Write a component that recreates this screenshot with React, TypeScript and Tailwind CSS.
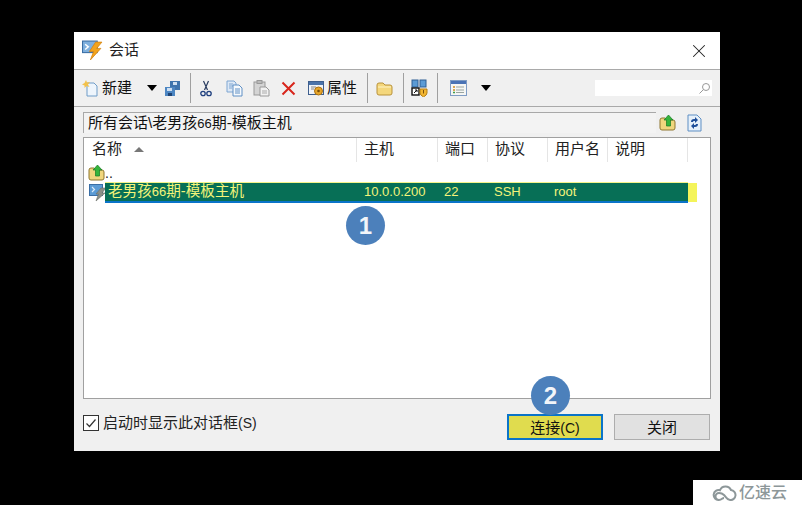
import { X } from 'lucide-react';

const cjk = "font-['Liberation_Sans','Noto_Sans_CJK_SC',sans-serif]";

function Caret() {
  return <div className="w-0 h-0 border-x-[5px] border-x-transparent border-t-[6px] border-t-black" />;
}

function Sep({ className }: { className: string }) {
  return <div className={`w-px h-[30px] bg-[#a0a0a0] ${className}`} />;
}

function SessionIcon({ size = 21 }: { size?: number }) {
  return (
    <svg width={size} height={size} viewBox="0 0 20 20">
      <rect x="0.5" y="1" width="14" height="11" fill="#7fb0de" stroke="#3a6ea5" />
      <path d="M3 4l3 2.5L3 9" stroke="#fff" strokeWidth="1.4" fill="none" />
      <path d="M13 2h6l-5 6h4L8 19l3-8H7z" fill="#f2a31c" stroke="#d0800f" strokeWidth="0.7" />
    </svg>
  );
}

function NewIcon() {
  return (
    <svg width="17" height="17" viewBox="0 0 17 17">
      <path d="M5 3h7l3 3v10H5z" fill="#eef5fc" stroke="#6f9cc8" />
      <path d="M4 0l1 2.5L8 2 6 4.500 7.500 7 4.500 6 2.500 8 2.500 5.500 0 4.500 2.500 3z" fill="#f3c14a" />
    </svg>
  );
}

function SaveIcon() {
  return (
    <svg width="17" height="17" viewBox="0 0 17 17">
      <path d="M6 1h10v9h-5v-3H6z" fill="#3f74ad" />
      <rect x="9" y="2" width="4" height="3" fill="#cfe0f2" />
      <rect x="1" y="7" width="10" height="9" fill="#4d86c2" />
      <rect x="3" y="8" width="5" height="3" fill="#cfe0f2" />
      <rect x="4" y="13" width="4" height="3" fill="#1f4474" />
    </svg>
  );
}

function ScissorsIcon() {
  return (
    <svg width="12" height="17" viewBox="0 0 12 17">
      <path d="M3.500 1l4 9M8.500 1l-4 9" stroke="#2a3c60" strokeWidth="1.200" fill="none" />
      <circle cx="3" cy="13.500" r="2.200" fill="none" stroke="#20407f" strokeWidth="1.300" />
      <circle cx="9" cy="13.500" r="2.200" fill="none" stroke="#20407f" strokeWidth="1.300" />
    </svg>
  );
}

function CopyIcon() {
  return (
    <svg width="17" height="17" viewBox="0 0 17 17">
      <path d="M1 1h7l2 2v9H1z" fill="#dce8f6" stroke="#7ea6d2" />
      <path d="M3 4h4M3 6h4M3 8h3" stroke="#7ea6d2" />
      <path d="M7 5h6l3 3v8H7z" fill="#f5f9fd" stroke="#5f8fc4" />
      <path d="M9 9h5M9 11h5M9 13h5" stroke="#5f8fc4" />
    </svg>
  );
}

function PasteIcon() {
  return (
    <svg width="17" height="17" viewBox="0 0 17 17">
      <rect x="1" y="2" width="11" height="13" fill="#d4d4d4" stroke="#999" />
      <rect x="4" y="0.500" width="5" height="3" fill="#bbb" stroke="#999" />
      <path d="M7 7h6l3 3v6H7z" fill="#f2f2f2" stroke="#999" />
      <path d="M9 11h5M9 13h5" stroke="#aaa" />
    </svg>
  );
}

function DeleteIcon() {
  return (
    <svg width="15" height="15" viewBox="0 0 15 15">
      <path d="M1.500 1.500l12 12M13.500 1.500l-12 12" stroke="#d8261c" strokeWidth="2" />
    </svg>
  );
}

function PropsIcon() {
  return (
    <svg width="17" height="17" viewBox="0 0 17 17">
      <rect x="0.500" y="1.500" width="15" height="13" fill="#f0f3f8" stroke="#3e5f8e" />
      <rect x="1" y="2" width="14" height="3" fill="#4a73aa" />
      <path d="M3 7h5M3 9h3" stroke="#888" />
      <circle cx="10.500" cy="11" r="4" fill="#e7a62a" stroke="#a86f10" />
      <circle cx="10.500" cy="11" r="1.300" fill="#7a4e08" />
    </svg>
  );
}

function FolderIcon() {
  return (
    <svg width="17" height="17" viewBox="0 0 17 17">
      <path d="M1 5q0-2 2-2h4l2 2h5q2 0 2 2v6q0 2-2 2H3q-2 0-2-2z" fill="#f4d77c" stroke="#b9923a" />
      <path d="M2 7h13" stroke="#fff3c4" />
    </svg>
  );
}

function ShortcutIcon() {
  return (
    <svg width="17" height="18" viewBox="0 0 17 18">
      <rect x="1" y="1" width="6" height="7" fill="#5b9bd5" stroke="#2f5f94" />
      <rect x="9" y="1" width="6" height="7" fill="#5b9bd5" stroke="#2f5f94" />
      <rect x="1" y="9" width="7" height="7" fill="#fff" stroke="#111" strokeWidth="1.400" />
      <path d="M3 14l3-3M4 11h2v2" stroke="#111" fill="none" />
      <path d="M9 10h7v4q0 2-3.500 4Q9 16 9 14z" fill="#f2b632" stroke="#b67f10" />
      <path d="M12.500 11v3.500" stroke="#7a4e08" />
    </svg>
  );
}

function ListIcon() {
  return (
    <svg width="17" height="16" viewBox="0 0 17 16">
      <rect x="0.500" y="0.500" width="16" height="15" fill="#f5f6f4" stroke="#7f9cc4" />
      <rect x="1" y="1" width="15" height="3" fill="#4a73b5" />
      <path d="M3 7h2M3 10h2" stroke="#d18a1c" strokeWidth="1.500" />
      <path d="M3 12.500h2" stroke="#3f9e4a" strokeWidth="1.500" />
      <path d="M6 7h8M6 10h8M6 12.500h8" stroke="#9aa5a0" />
    </svg>
  );
}

function FolderUpIcon() {
  return (
    <svg width="17" height="17" viewBox="0 0 17 17">
      <path d="M1 6q0-2 2-2h3l2 2h6q2 0 2 2v6q0 2-2 2H3q-2 0-2-2z" fill="#f0d67e" stroke="#8f7730" />
      <path d="M9.500 1l4.500 5h-2.500v6H7.500V6H5z" fill="#35b43c" stroke="#177a22" strokeWidth="0.700" />
    </svg>
  );
}

function RefreshIcon() {
  return (
    <svg width="15" height="18" viewBox="0 0 15 18">
      <path d="M1 1h9l4 4v12H1z" fill="#e6f0fa" stroke="#5f8fc4" />
      <path d="M4 8q0-3 3-3h1V3l3 3-3 3V7H7q-1 0-1 1z" fill="#1d4e9a" />
      <path d="M11 10q0 3-3 3H7v2l-3-3 3-3v2h1q1 0 1-1z" fill="#1d4e9a" />
    </svg>
  );
}

function HostIcon() {
  return (
    <svg width="18" height="18" viewBox="0 0 18 18">
      <rect x="0.500" y="0.500" width="13" height="11" fill="#5b9bd5" stroke="#3a6ea5" />
      <path d="M3 3l2.500 2.500L3 8" stroke="#dcebf8" strokeWidth="1.200" fill="none" />
      <path d="M12 4h5l-4 5h3L7 17l2.500-7H7z" fill="#8b8f88" stroke="#6a6e68" strokeWidth="0.600" />
    </svg>
  );
}

function CloudLogo() {
  return (
    <svg width="27" height="16" viewBox="0 0 27 16">
      <path d="M8 15a5 5 0 1 1 1-9.800A6 6 0 0 1 20 5a5 5 0 1 1-1 10c-3 0-4-3-6-5s-3-2-5-2a3.500 3.500 0 0 0 0 7c3 0 3-2 5-2" fill="none" stroke="#8d9799" strokeWidth="2" />
    </svg>
  );
}

function HeaderCell({ label, className }: { label: string; className: string }) {
  return (
    <div className={`h-[24px] border-r border-[#e5e5e5] text-[15px] leading-[22px] text-[#222] pl-[7px] whitespace-nowrap ${className}`}>
      {label}
    </div>
  );
}

export default function App() {
  return (
    <div className={`relative w-[802px] h-[505px] bg-black overflow-hidden pt-[32px] pl-[74px] ${cjk}`}>
      <div className="w-[646px] h-[419px] bg-[#f0f0f0] flex flex-col">
        <div className="h-[37px] bg-white flex items-center pl-[8px] pr-[10px]">
          <SessionIcon />
          <span className="ml-[6px] text-[15px] text-[#222]">会话</span>
          <X className="ml-auto w-[22px] h-[22px] text-[#222]" strokeWidth={1.100} />
        </div>

        <div className="h-[38px] border-y border-[#a9a9a9] flex items-center pl-[8px]">
          <NewIcon />
          <span className="ml-[3px] w-[30px] text-[15px] text-[#111] whitespace-nowrap">新建</span>
          <div className="ml-[15px]"><Caret /></div>
          <div className="ml-[7px]"><SaveIcon /></div>
          <Sep className="ml-[9px]" />
          <div className="ml-[9px]"><ScissorsIcon /></div>
          <div className="ml-[14px]"><CopyIcon /></div>
          <div className="ml-[10px]"><PasteIcon /></div>
          <div className="ml-[11px]"><DeleteIcon /></div>
          <div className="ml-[12px]"><PropsIcon /></div>
          <span className="ml-[2px] w-[30px] text-[15px] text-[#111] whitespace-nowrap">属性</span>
          <Sep className="ml-[10px]" />
          <div className="ml-[8px]"><FolderIcon /></div>
          <Sep className="ml-[10px]" />
          <div className="ml-[7px]"><ShortcutIcon /></div>
          <Sep className="ml-[9px]" />
          <div className="ml-[12px]"><ListIcon /></div>
          <div className="ml-[14px]"><Caret /></div>
          <div className="ml-[104px] w-[117px] h-[16px] bg-white flex items-center justify-end pr-[1px]">
            <svg width="13" height="13" viewBox="0 0 13 13">
              <circle cx="8" cy="5" r="3.500" fill="none" stroke="#999" />
              <path d="M5.500 7.500L1.500 11.500" stroke="#999" />
            </svg>
          </div>
        </div>

        <div className="mt-[5px] h-[21px] ml-[9px] flex items-center">
          <div className="w-[573px] h-[21px] border-t border-l border-[#a8a8a8] bg-[#f3f3f3] text-[15px] leading-[19px] pl-[4px] text-[#111] whitespace-nowrap">
            所有会话\老男孩<span className="text-[13px]">66</span>期-模板主机
          </div>
          <div className="ml-[3px]"><FolderUpIcon /></div>
          <div className="ml-[11px]"><RefreshIcon /></div>
        </div>

        <div className="mt-[4px] ml-[9px] w-[628px] h-[262px] bg-white border border-[#a0a0a0] flex flex-col text-[#222]">
          <div className="flex">
            <div className="w-[273px] h-[24px] border-r border-[#e5e5e5] flex items-center pl-[8px] pb-[2px]">
              <span className="text-[15px]">名称</span>
              <div className="ml-[12px] w-0 h-0 border-x-[5px] border-x-transparent border-b-[5px] border-b-[#777]" />
            </div>
            <HeaderCell label="主机" className="w-[81px]" />
            <HeaderCell label="端口" className="w-[50px]" />
            <HeaderCell label="协议" className="w-[60px]" />
            <HeaderCell label="用户名" className="w-[60px]" />
            <HeaderCell label="说明" className="w-[80px]" />
          </div>
          <div className="h-[19px] flex items-center pl-[4px] mt-[1px]">
            <FolderUpIcon />
            <span className="text-[14px] leading-none">..</span>
          </div>
          <div className="h-[21px] flex items-center pl-[5px]">
            <HostIcon />
            <div className="ml-[-2px] w-[583px] h-[21px] bg-[#076f56] border-t border-t-[#f4f48a] border-b-2 border-b-[#0a74c9] flex items-center text-[#f4f47a]">
              <span className="w-[252px] pl-[3px] text-[14.6px] leading-[16px] pb-[1px] whitespace-nowrap">老男孩<span className="text-[13px]">66</span>期-模板主机</span>
              <span className="w-[80px] pl-[7px] text-[13px]">10.0.0.200</span>
              <span className="w-[50px] pl-[7px] text-[13px]">22</span>
              <span className="w-[60px] pl-[7px] text-[13px]">SSH</span>
              <span className="w-[60px] pl-[7px] text-[13px]">root</span>
            </div>
            <div className="w-[9px] h-[19px] bg-[#f4f45a]" />
          </div>
        </div>

        <div className="mt-[15px] ml-[9px] w-[627px] flex items-start h-[26px]">
          <div className="mt-[1px] w-[16px] h-[16px] border border-[#333] bg-white flex items-center justify-center">
            <svg width="12" height="12" viewBox="0 0 12 12">
              <path d="M1.500 6.500l3 3 6-7" fill="none" stroke="#333" strokeWidth="1.200" />
            </svg>
          </div>
          <span className="ml-[4px] text-[15px] leading-[18px] text-[#222] whitespace-nowrap">
            启动时显示此对话框<span className="text-[14px]">(S)</span>
          </span>
          <button className="ml-auto w-[96px] h-[26px] bg-[#e0dc4e] border-2 border-[#0a74c9] text-[15px] leading-none text-[#111]">
            连接<span className="text-[14px]">(C)</span>
          </button>
          <button className="ml-[11px] w-[96px] h-[26px] bg-[#e1e1e1] border border-[#adadad] text-[15px] leading-none text-[#111]">
            关闭
          </button>
        </div>
      </div>

      <div className="absolute left-[346px] top-[206px] w-[39px] h-[39px] rounded-full bg-[#4c80bb] flex items-center justify-center text-[#f2f5f9] text-[24px] font-bold font-['Liberation_Sans',sans-serif]">
        1
      </div>
      <div className="absolute left-[531px] top-[376px] w-[39px] h-[39px] rounded-full bg-[#4c80bb] flex items-center justify-center text-[#f2f5f9] text-[24px] font-bold font-['Liberation_Sans',sans-serif]">
        2
      </div>

      <div className="absolute right-0 bottom-0 w-[109px] h-[25px] bg-white flex items-center pl-[18px]">
        <CloudLogo />
        <span className="ml-[1px] text-[16px] font-medium text-[#8d9799] whitespace-nowrap">亿速云</span>
      </div>
    </div>
  );
}
